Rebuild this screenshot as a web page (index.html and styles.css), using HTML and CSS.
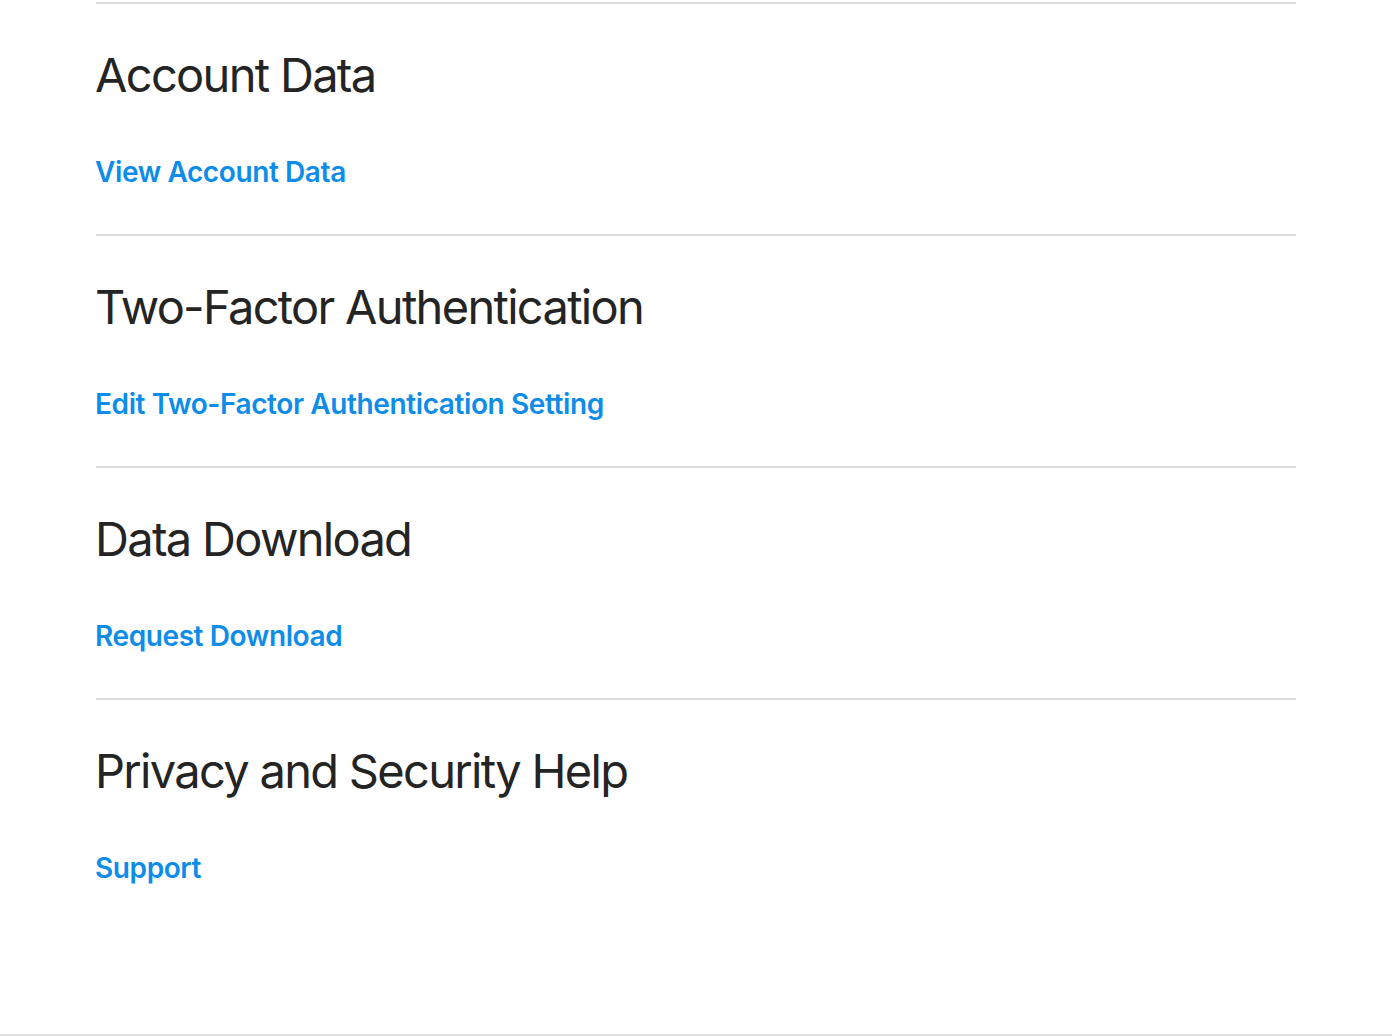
FILE: index.html
```html
<!DOCTYPE html>
<html lang="en">
<head>
<meta charset="utf-8">
<title>Privacy</title>
<link rel="stylesheet" href="styles.css">
</head>
<body>
<main class="page">
  <section class="block">
    <h2 class="block-title">Account Data</h2>
    <a class="block-link" href="#">View Account Data</a>
  </section>
  <section class="block">
    <h2 class="block-title">Two-Factor Authentication</h2>
    <a class="block-link" href="#">Edit Two-Factor Authentication Setting</a>
  </section>
  <section class="block">
    <h2 class="block-title">Data Download</h2>
    <a class="block-link" href="#">Request Download</a>
  </section>
  <section class="block">
    <h2 class="block-title">Privacy and Security Help</h2>
    <a class="block-link" href="#">Support</a>
  </section>
</main>
<footer class="foot"></footer>
</body>
</html>
```

FILE: styles.css
```css
html, body {
  margin: 0;
  padding: 0;
  background: #ffffff;
}
body {
  font-family: "Inter", "Liberation Sans", sans-serif;
  color: #242424;
}
.page {
  width: 1200px;
  margin: 0 auto;
  padding-top: 2px;
  padding-bottom: 104px;
}
.block {
  border-top: 2px solid #dcdcdc;
  padding: 43px 0 45px;
  display: flex;
  flex-direction: column;
  align-items: flex-start;
  box-sizing: border-box;
  height: 232px;
}
.block-title {
  margin: 0 0 0 -1px;
  font-size: 47px;
  line-height: 56px;
  font-weight: 400;
  letter-spacing: -0.036em;
  color: #242424;
}
.block-link {
  margin-top: 52px;
  margin-left: -1px;
  font-size: 28px;
  line-height: 34px;
  font-weight: 600;
  letter-spacing: -0.4px;
  color: #0d8de9;
  text-decoration: none;
}
.foot {
  border-top: 2px solid #e2e2e2;
}
```
